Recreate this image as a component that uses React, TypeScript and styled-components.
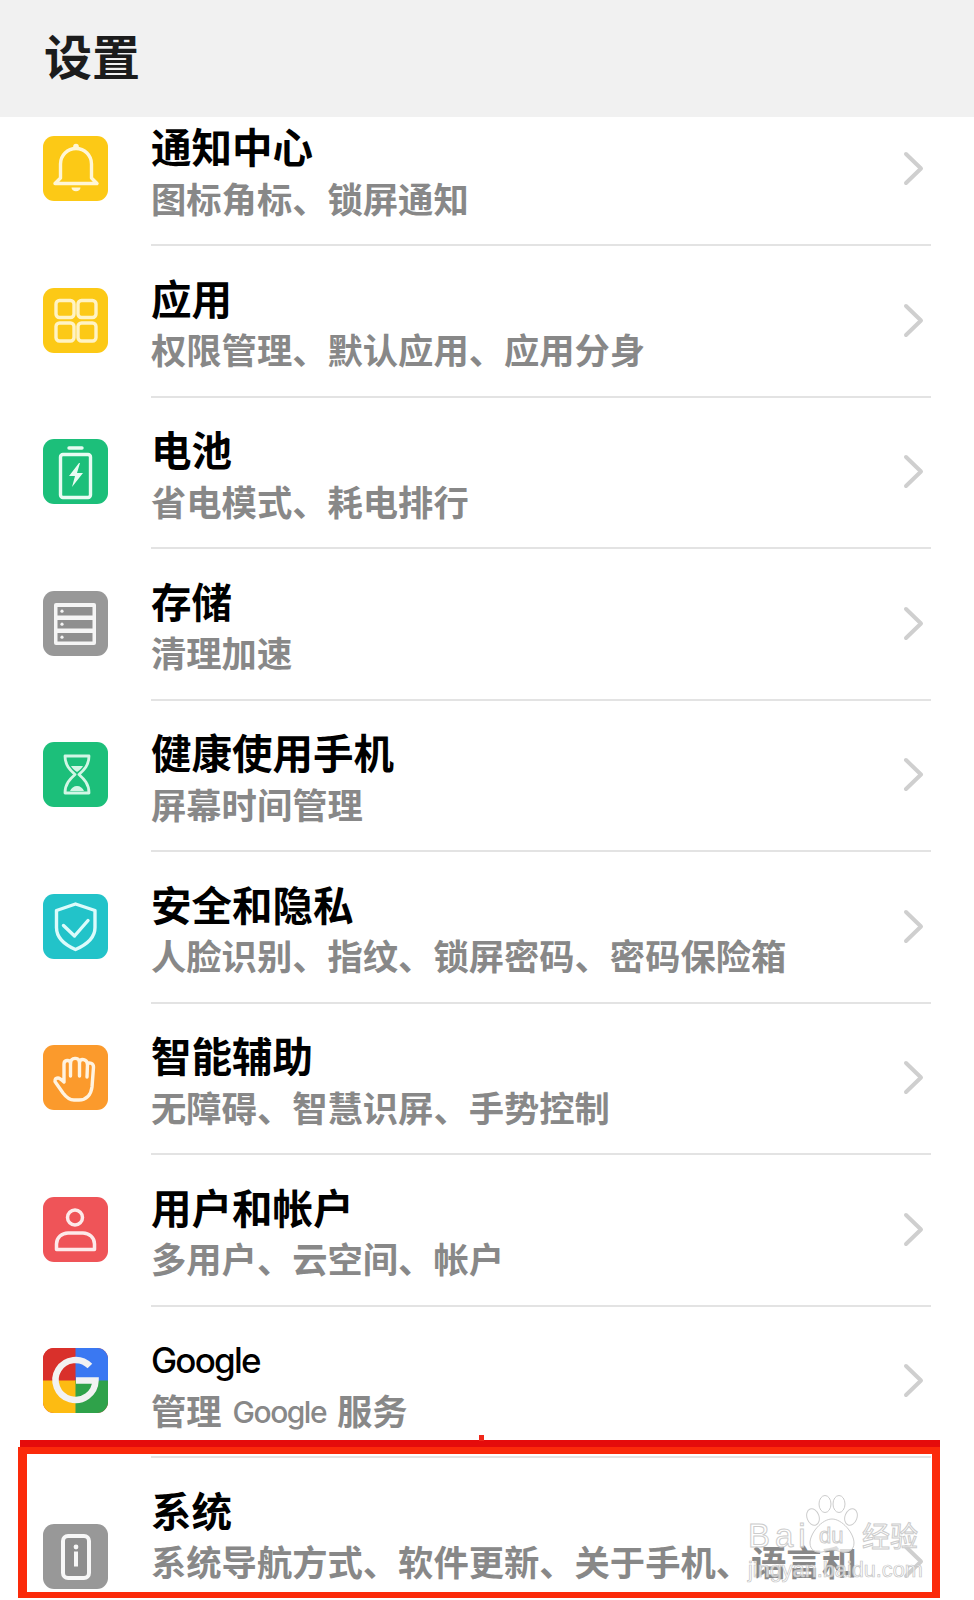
import React from "react";
import styled, { createGlobalStyle } from "styled-components";

const GlobalStyle = createGlobalStyle`
  html,
  body {
    margin: 0;
    padding: 0;
    background: #fff;
  }
`;

const Page = styled.div`
  position: relative;
  width: 974px;
  height: 1600px;
  overflow: hidden;
  background: #fff;
  font-family: "Noto Sans CJK SC", "Noto Sans", sans-serif;
`;

const Header = styled.header`
  position: relative;
  z-index: 1;
  display: flex;
  align-items: center;
  height: 117px;
  padding-left: 44px;
  background: #f1f1f1;
`;

const HeaderTitle = styled.h1`
  margin: 0 0 10px;
  font-size: 48px;
  line-height: 60px;
  font-weight: 700;
  color: #1c1c1c;
`;

const List = styled.div`
  margin-top: -22.5px;
`;

const Row = styled.div`
  display: flex;
  align-items: center;
  padding-left: 43px;
`;

const IconTile = styled.div<{ $bg: string }>`
  flex: none;
  width: 65px;
  height: 65px;
  margin-right: 43px;
  margin-bottom: 3px;
  border-radius: 11px;
  overflow: hidden;
  background: ${(p) => p.$bg};
`;

const IconSvg = styled.svg`
  display: block;
  width: 65px;
  height: 65px;
`;

const Body = styled.div<{ $tail: boolean }>`
  flex: 1;
  display: flex;
  align-items: center;
  box-sizing: border-box;
  min-height: 151.5px;
  margin-right: 43px;
  padding: 20.75px 7px ${(p) => (p.$tail ? "12.25px" : "22.25px")} 0;
  border-bottom: 2px solid #e3e3e3;
`;

const Texts = styled.div`
  flex: 1;
  min-width: 0;
  padding-right: 26px;
`;

const Title = styled.div`
  font-size: 40.5px;
  line-height: 62.5px;
  height: 58.5px;
  font-weight: 700;
  color: #000;
`;

const Sub = styled.div`
  font-size: 35.3px;
  line-height: 48px;
  font-weight: 700;
  color: #888;
`;

const SubTail = styled.span`
  display: block;
  margin-top: 10px;
`;

const LatinTitle = styled.span`
  font-family: Inter, sans-serif;
  font-size: 35px;
  font-weight: 500;
  letter-spacing: -1.8px;
  vertical-align: 2px;
`;

const LatinSub = styled.span`
  margin: 0 3px;
  font-family: Inter, sans-serif;
  font-size: 30px;
  font-weight: 500;
  line-height: 0;
  letter-spacing: -1.5px;
  vertical-align: 2px;
`;

const ChevronSvg = styled.svg`
  flex: none;
  width: 21px;
  height: 35px;
`;

const RedTopStrip = styled.div`
  position: absolute;
  z-index: 2;
  left: 20px;
  top: 1440px;
  width: 920px;
  height: 8px;
  background: #e50b0b;
`;

const RedTick = styled.div`
  position: absolute;
  z-index: 2;
  left: 479px;
  top: 1435px;
  width: 5px;
  height: 6px;
  background: #f0281a;
`;

const RedFrame = styled.div`
  position: absolute;
  z-index: 2;
  left: 18px;
  top: 1447px;
  box-sizing: border-box;
  width: 922px;
  height: 151px;
  border: solid #fb2a0a;
  border-width: 7px 8px 6px 9px;
`;

const Watermark = styled.svg`
  position: absolute;
  z-index: 3;
  left: 741px;
  top: 1493px;
  width: 190px;
  height: 92px;
`;

const WaterText = styled.text`
  font-family: "Liberation Sans", sans-serif;
`;

const WaterBai = styled.text`
  font-family: "Liberation Sans", sans-serif;
  letter-spacing: 5px;
`;

const WaterCjk = styled.text`
  font-family: "Noto Sans CJK SC", sans-serif;
`;

const WaterFooter = styled.text`
  font-family: "Liberation Sans", sans-serif;
  fill: #ffffff;
  fill-opacity: 0.65;
  stroke: #c4c4c4;
  stroke-width: 0.7;
`;

const Bell = () => (
  <IconSvg viewBox="0 0 65 65" fill="none" stroke="#fff6d6" strokeWidth="3.4" strokeLinejoin="round">
    <path d="M17.5 42V28a15.5 15.5 0 0 1 31 0v14l5.5 5.5H12z" />
    <circle cx="33" cy="10.5" r="2.8" fill="#fff6d6" stroke="none" />
    <path d="M28.5 51.5h9a4.5 3.8 0 0 1-9 0z" fill="#fff6d6" stroke="none" />
  </IconSvg>
);

const Apps = () => (
  <IconSvg viewBox="0 0 65 65" fill="none" stroke="#fff3c4" strokeWidth="3.4">
    <rect x="13" y="12.5" width="18" height="17" rx="3.5" />
    <rect x="35" y="12.5" width="18" height="17" rx="3.5" />
    <rect x="13" y="35" width="18" height="18" rx="3.5" />
    <rect x="35" y="35" width="18" height="18" rx="3.5" />
  </IconSvg>
);

const Battery = () => (
  <IconSvg viewBox="0 0 65 65" fill="none" stroke="#e8fbf2" strokeWidth="3.4">
    <rect x="17.5" y="15.5" width="30" height="43" rx="2.5" />
    <path d="M26 9h13" strokeLinecap="round" />
    <path d="M36 24L26 37h6l-3 11 11-14h-6l3-10z" fill="#e8fbf2" stroke="none" />
  </IconSvg>
);

const Storage = () => (
  <IconSvg viewBox="0 0 65 65">
    <rect x="11" y="12" width="42" height="42" rx="2" fill="#f5f5f5" />
    {[16, 29, 42].map((y) => (
      <g key={y}>
        <rect x="14.5" y={y} width="35" height="8.5" fill="#8f8f8f" />
        <circle cx="19" cy={y + 4.2} r="1.6" fill="#f5f5f5" />
      </g>
    ))}
  </IconSvg>
);

const Hourglass = () => (
  <IconSvg viewBox="0 0 65 65" fill="none" stroke="#d2f6e5" strokeWidth="2.8" strokeLinejoin="round">
    <path d="M22 14h24c0 9-5 14-10 18.500 5 4.500 10 9.500 10 18.500H22c0-9 5-14 10-18.500C27 28 22 23 22 14z" />
    <path d="M28 24h12c-1 2-3 4-6 6-3-2-5-4-6-6z" fill="#d2f6e5" stroke="none" />
    <path d="M27 49c1-3 4-5 7-5s6 2 7 5z" fill="#d2f6e5" stroke="none" />
  </IconSvg>
);

const Shield = () => (
  <IconSvg viewBox="0 0 65 65" fill="none" stroke="#dcfbfb" strokeWidth="3.4" strokeLinejoin="round" strokeLinecap="round">
    <path d="M32.500 10L52 16.500v17c0 10-8 17-19.500 22C21 50.500 13.500 43.500 13.500 33.500v-17z" />
    <path d="M20.500 31.500l11 10.500 13.500-15.500" />
  </IconSvg>
);

const Hand = () => (
  <IconSvg viewBox="0 0 65 65" fill="none" stroke="#fff3e0" strokeWidth="3.4" strokeLinejoin="round" strokeLinecap="round">
    <path d="M13 38c-2-2-1-5 2-5 2 0 4 2 6 4V19c0-4.500 6-4.500 6.500-1 .5-6 8.500-6 9-1 1-4 7.500-3 8 2 1.500-2 6-1 6 3L49 42c-1 8-6 13-13 13h-5c-5 0-8-3-11-7z" />
    <path d="M27.500 18v13M36.500 17v14M44.500 19l-.5 13" />
  </IconSvg>
);

const User = () => (
  <IconSvg viewBox="0 0 65 65" fill="none" stroke="#fdeaea" strokeWidth="3.5" strokeLinejoin="round">
    <circle cx="32" cy="20.500" r="7.500" />
    <path d="M13.500 52.500V47c0-6.500 5.500-11 11.500-11h15c6 0 11.500 4.500 11.500 11v5.500z" />
  </IconSvg>
);

const GoogleMark = () => (
  <IconSvg viewBox="0 0 65 65">
    <rect x="0" y="0" width="33" height="33" fill="#d9302b" />
    <rect x="32.500" y="0" width="33" height="33" fill="#3a78f2" />
    <rect x="0" y="32.500" width="33" height="33" fill="#fdbb12" />
    <rect x="32.500" y="32.500" width="33" height="33" fill="#2fa24a" />
    <path d="M46.900 18.100A20 20 0 1 0 52.500 32.500H33" fill="none" stroke="#f2f2f2" strokeWidth="6.500" />
  </IconSvg>
);

const Info = () => (
  <IconSvg viewBox="0 0 65 65">
    <rect x="20" y="12" width="26" height="42" rx="5" fill="#8e8e8e" stroke="#f7f7f7" strokeWidth="4" />
    <circle cx="33" cy="23" r="2.400" fill="#f7f7f7" />
    <rect x="31" y="27.500" width="4" height="15" fill="#f7f7f7" />
  </IconSvg>
);

const Chevron = () => (
  <ChevronSvg viewBox="0 0 21 35" fill="none" stroke="#cfcfcf" strokeWidth="4" strokeLinecap="round" strokeLinejoin="round">
    <path d="M3 3l15 14.500L3 32" />
  </ChevronSvg>
);

type Item = {
  icon: React.ReactNode;
  bg: string;
  title: React.ReactNode;
  sub: React.ReactNode;
  tail?: string;
};

const items: Item[] = [
  { icon: <Bell />, bg: "#fcc916", title: "通知中心", sub: "图标角标、锁屏通知" },
  { icon: <Apps />, bg: "#fcc916", title: "应用", sub: "权限管理、默认应用、应用分身" },
  { icon: <Battery />, bg: "#1cbf7a", title: "电池", sub: "省电模式、耗电排行" },
  { icon: <Storage />, bg: "#989898", title: "存储", sub: "清理加速" },
  { icon: <Hourglass />, bg: "#1cbf7a", title: "健康使用手机", sub: "屏幕时间管理" },
  { icon: <Shield />, bg: "#22c3c9", title: "安全和隐私", sub: "人脸识别、指纹、锁屏密码、密码保险箱" },
  { icon: <Hand />, bg: "#fb9a2c", title: "智能辅助", sub: "无障碍、智慧识屏、手势控制" },
  { icon: <User />, bg: "#ef5458", title: "用户和帐户", sub: "多用户、云空间、帐户" },
  {
    icon: <GoogleMark />,
    bg: "#d9302b",
    title: <LatinTitle>Google</LatinTitle>,
    sub: (
      <>
        管理 <LatinSub>Google</LatinSub> 服务
      </>
    ),
  },
  {
    icon: <Info />,
    bg: "#989898",
    title: "系统",
    sub: "系统导航方式、软件更新、关于手机、语言和",
    tail: "输入法",
  },
];

export default function App() {
  return (
    <Page>
      <GlobalStyle />
      <Header>
        <HeaderTitle>设置</HeaderTitle>
      </Header>
      <List>
        {items.map((item, i) => (
          <Row key={i}>
            <IconTile $bg={item.bg}>{item.icon}</IconTile>
            <Body $tail={Boolean(item.tail)}>
              <Texts>
                <Title>{item.title}</Title>
                <Sub>
                  {item.sub}
                  {item.tail && <SubTail>{item.tail}</SubTail>}
                </Sub>
              </Texts>
              <Chevron />
            </Body>
          </Row>
        ))}
      </List>

      <RedTopStrip />
      <RedTick />
      <RedFrame />

      <Watermark viewBox="0 0 190 92">
        <g fill="#ffffff" fillOpacity="0.7" stroke="#cccccc" strokeWidth="1">
          <ellipse cx="72" cy="24" rx="6" ry="8.5" transform="rotate(-20 72 24)" />
          <ellipse cx="84" cy="11" rx="6" ry="8.5" />
          <ellipse cx="98" cy="11" rx="6" ry="8.5" />
          <ellipse cx="110" cy="24" rx="6" ry="8.5" transform="rotate(20 110 24)" />
          <path d="M91 26c10 0 22 14 22 24 0 8-7 10-12 9-4-1-6-2-10-2s-6 1-10 2c-5 1-12-1-12-9 0-10 12-24 22-24z" />
          <WaterBai x="7" y="54" fontSize="33">Bai</WaterBai>
          <WaterText x="78" y="50" fontSize="22">du</WaterText>
          <WaterCjk x="121" y="54" fontSize="28">经验</WaterCjk>
        </g>
        <WaterFooter x="7" y="84" fontSize="21.7">jingyan.baidu.com</WaterFooter>
      </Watermark>
    </Page>
  );
}
